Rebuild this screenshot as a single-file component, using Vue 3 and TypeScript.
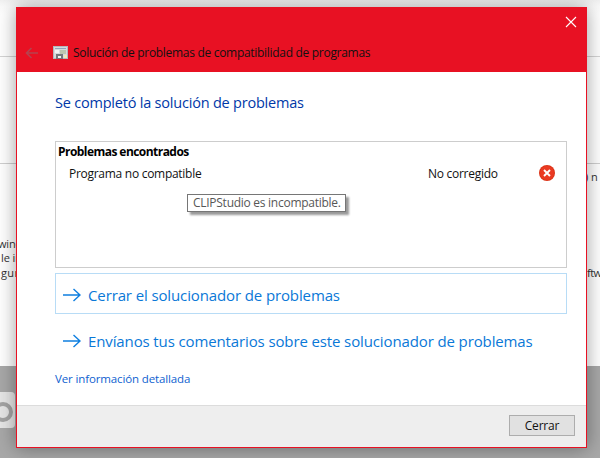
<script setup lang="ts">
const title = 'Solución de problemas de compatibilidad de programas'
</script>

<template>
  <div class="desktop">
    <div class="page">
      <div class="rule rule-a"></div>
      <div class="rule rule-b"></div>
      <span class="bg-text t1">winc</span>
      <span class="bg-text t2">le ir</span>
      <span class="bg-text t3">gur</span>
      <span class="bg-text t4">) n</span>
      <span class="bg-text t5">ftw</span>
    </div>
    <div class="gray">
      <div class="search"><span class="ring"></span></div>
    </div>

    <div class="window">
      <header class="head">
        <div class="close-row">
          <svg class="close" width="14" height="14" viewBox="0 0 14 14">
            <path d="M2 2L12 12M12 2L2 12" stroke="#fff" stroke-width="1.1" fill="none" />
          </svg>
        </div>
        <div class="title-row">
          <svg class="back" width="14" height="12" viewBox="0 0 14 12">
            <path d="M13 6H2M6.500 1L1.500 6L6.500 11" stroke="#b5434f" stroke-width="1.600" fill="none" />
          </svg>
          <svg class="app" width="15" height="13" viewBox="0 0 15 13">
            <rect x="0" y="0" width="15" height="13" fill="#d6dadd" />
            <rect x="0.500" y="0.500" width="14" height="12" fill="none" stroke="#b4b8bb" />
            <rect x="2" y="2" width="11" height="1" fill="#8fa6bc" />
            <rect x="2" y="4" width="4" height="3" fill="#f3f3f3" />
            <path d="M7 4h6v4H7z" fill="#bcc7b0" />
            <rect x="3" y="8" width="7" height="5" fill="#75797c" />
            <rect x="5" y="10" width="3" height="2" fill="#f2f2f2" />
            <rect x="11" y="9" width="3" height="3" fill="#efe9b8" />
          </svg>
          <span class="title">{{ title }}</span>
        </div>
      </header>

      <main class="body">
        <h1 class="heading">Se completó la solución de problemas</h1>

        <section class="panel">
          <div class="panel-title">Problemas encontrados</div>
          <div class="problem">
            <span class="problem-name">Programa no compatible</span>
            <span class="problem-state">No corregido</span>
            <svg class="err" width="16" height="16" viewBox="0 0 16 16">
              <circle cx="8" cy="8" r="8" fill="#dc3418" />
              <circle cx="8" cy="8" r="7" fill="#ea3a22" />
              <path d="M5 5L11 11M11 5L5 11" stroke="#fff" stroke-width="1.900" fill="none" />
            </svg>
          </div>
          <div class="tooltip">CLIPStudio es incompatible.</div>
        </section>

        <a class="action action-box">
          <svg width="18" height="14" viewBox="0 0 18 14">
            <path d="M0 7H17M10.500 1L17 7L10.500 13" stroke="#0f7fe0" stroke-width="1.400" fill="none" />
          </svg>
          <span>Cerrar el solucionador de problemas</span>
        </a>
        <a class="action action-plain">
          <svg width="18" height="14" viewBox="0 0 18 14">
            <path d="M0 7H17M10.500 1L17 7L10.500 13" stroke="#0f7fe0" stroke-width="1.400" fill="none" />
          </svg>
          <span>Envíanos tus comentarios sobre este solucionador de problemas</span>
        </a>
        <a class="details">Ver información detallada</a>
      </main>

      <footer class="foot">
        <button class="btn" type="button">Cerrar</button>
      </footer>
    </div>
  </div>
</template>

<style>
html, body { margin: 0; padding: 0; overflow: hidden; }
</style>

<style scoped>
.desktop {
  position: relative;
  width: 600px;
  height: 458px;
  overflow: hidden;
  background: #fff;
  font-family: "Open Sans", "Noto Sans", sans-serif;
  display: flex;
  flex-direction: column;
}
.page {
  position: relative;
  height: 366px;
  background: linear-gradient(#f0f0f0, #fafafa 6px, #fff 16px);
  flex: none;
}
.gray {
  position: relative;
  flex: 1;
  background: #a8a8a8;
}
.search {
  position: absolute;
  left: -10px;
  top: 26px;
  width: 25px;
  height: 36px;
  background: #e6e6e6;
  border-radius: 4px;
}
.ring {
  position: absolute;
  left: 3px;
  top: 10px;
  width: 12px;
  height: 12px;
  border: 4px solid #a4a4a4;
  border-radius: 50%;
}
.rule { position: absolute; left: 0; right: 0; height: 1px; background: #cfcfcf; }
.rule-a { top: 56px; background: #d4d4d4; }
.rule-b { top: 163px; }
.bg-text { position: absolute; font-size: 11px; line-height: 14px; color: #333; white-space: nowrap; }
.t1 { left: -2px; top: 237px; letter-spacing: -0.200px; }
.t2 { left: 1px; top: 251px; letter-spacing: -0.100px; }
.t3 { left: 1px; top: 266px; letter-spacing: 0.400px; }
.t4 { left: 585px; top: 170px; }
.t5 { left: 587px; top: 266px; letter-spacing: -0.500px; }

.window {
  position: absolute;
  left: 16px;
  top: 7px;
  width: 571px;
  height: 441px;
  box-sizing: border-box;
  border: 1px solid #e81123;
  border-top: 0;
  background: #fff;
  display: flex;
  flex-direction: column;
  box-shadow: 0 0 18px rgba(0, 0, 0, 0.38);
}
.head {
  height: 65px;
  margin: 0 -1px;
  background: #e81123;
  flex: none;
  display: flex;
  flex-direction: column;
}
.close-row {
  display: flex;
  justify-content: flex-end;
  padding: 8px 9px 0 0;
  height: 14px;
}
.title-row {
  display: flex;
  align-items: center;
  margin-top: 14px;
  height: 20px;
  padding-left: 9px;
}
.back { flex: none; margin-top: -1px; }
.app { flex: none; margin-left: 14px; margin-top: -2px; }
.title {
  margin-left: 6px;
  font-size: 12px;
  line-height: 16px;
  color: #111;
  white-space: nowrap;
  letter-spacing: -0.300px;
  transform: translateX(-1px);
}
.body {
  flex: 1;
  padding: 0 19px 0 38px;
  display: flex;
  flex-direction: column;
  min-height: 0;
}
.heading {
  margin: 20px 0 0;
  font-size: 14.500px;
  line-height: 21px;
  font-weight: 400;
  color: #0038a8;
  letter-spacing: -0.210px;
}
.panel {
  position: relative;
  margin-top: 28px;
  height: 127px;
  box-sizing: border-box;
  border: 1px solid #cdcdcd;
  flex: none;
}
.panel-title {
  padding: 2px 0 0 2px;
  font-size: 12px;
  line-height: 16px;
  font-weight: 700;
  color: #000;
  letter-spacing: -0.550px;
}
.problem {
  display: grid;
  grid-template-columns: 359px 1fr 16px;
  align-items: center;
  padding: 6px 11px 0 13px;
  font-size: 12px;
  line-height: 16px;
  color: #111;
}
.problem-name, .problem-state { letter-spacing: -0.280px; white-space: nowrap; }
.err { margin-top: -2px; }
.tooltip {
  position: absolute;
  left: 131px;
  top: 52px;
  width: 159px;
  height: 18px;
  box-sizing: border-box;
  border: 1px solid #767676;
  background: #fff;
  padding-left: 5px;
  font-size: 12px;
  line-height: 16px;
  color: #575757;
  white-space: nowrap;
  letter-spacing: -0.270px;
  box-shadow: 3px 3px 2px rgba(0, 0, 0, 0.4);
}
.action {
  display: flex;
  align-items: center;
  gap: 7px;
  box-sizing: border-box;
  color: #0a78d7;
  font-size: 15px;
  white-space: nowrap;
  letter-spacing: -0.120px;
  padding-left: 7px;
  flex: none;
}
.action-box {
  margin-top: 5px;
  height: 41px;
  padding-top: 2px;
  border: 1px solid #b8dcf6;
}
.action-plain {
  margin-top: 3px;
  height: 48px;
  padding-left: 8px;
}
.details {
  margin-top: 6px;
  font-size: 11.500px;
  line-height: 16px;
  color: #0f5fd0;
  white-space: nowrap;
  letter-spacing: -0.130px;
}
.foot {
  height: 42px;
  flex: none;
  box-sizing: border-box;
  border-top: 1px solid #dcdcdc;
  background: #eeeeee;
  display: flex;
  justify-content: flex-end;
  align-items: flex-start;
  padding: 9px 11px 0 0;
}
.btn {
  width: 66px;
  height: 21px;
  box-sizing: border-box;
  border: 1px solid #adadad;
  background: #e1e1e1;
  padding: 0;
  font-family: inherit;
  font-size: 12px;
  color: #111;
  letter-spacing: -0.200px;
}
</style>
